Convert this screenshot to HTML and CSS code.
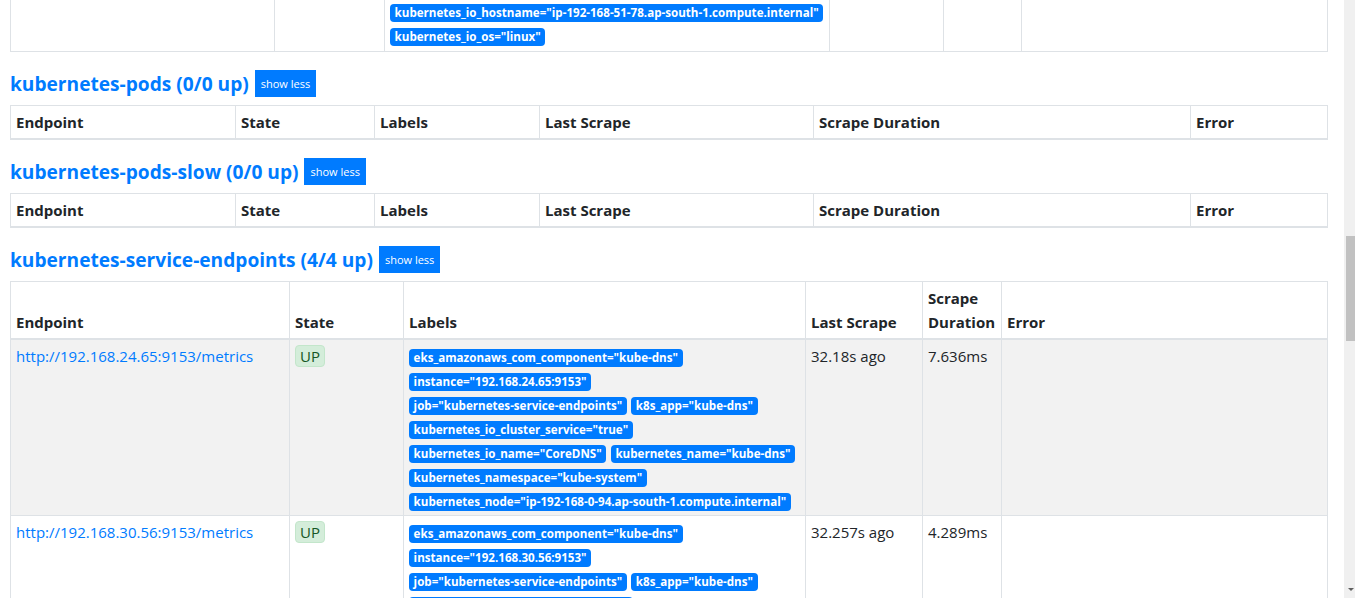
FILE: index.html
```html
<!DOCTYPE html>
<html lang="en">
<head>
<meta charset="utf-8">
<title>Prometheus Time Series Collection and Processing Server</title>
<link rel="stylesheet" href="styles.css">
</head>
<body>
<nav class="navbar">
  <span class="brand">Prometheus</span>
  <span class="nav-link">Alerts</span>
  <span class="nav-link">Graph</span>
  <span class="nav-link">Status</span>
  <span class="nav-link">Help</span>
</nav>
<main class="page">
  <h2 class="page-title">Targets</h2>
  <div class="filters"><button class="filter-btn active">All</button><button class="filter-btn">Unhealthy</button></div>

  <section class="pool">
    <div class="pool-head"><a class="pool-title" href="#pool-kubernetes-apiservers">kubernetes-apiservers (1/1 up)</a><button class="btn-xs">show less</button></div>
    <table class="targets cols-nodes">
      <colgroup><col class="c1"><col class="c2"><col class="c3"><col class="c4"><col class="c5"><col class="c6"></colgroup>
      <thead><tr><th>Endpoint</th><th>State</th><th>Labels</th><th>Last Scrape</th><th>Scrape Duration</th><th>Error</th></tr></thead>
      <tbody>
        <tr><td class="ep"><a class="ep-link" href="#">https://192.168.143.26:443/metrics</a></td><td><span class="state-up">UP</span></td><td><span class="label">instance="192.168.143.26:443"</span><span class="label">job="kubernetes-apiservers"</span></td><td>14.502s ago</td><td>58.91ms</td><td></td></tr>
      </tbody>
    </table>
  </section>

  <section class="pool">
    <div class="pool-head"><a class="pool-title" href="#pool-kubernetes-nodes">kubernetes-nodes (2/2 up)</a><button class="btn-xs">show less</button></div>
    <table class="targets cols-nodes">
      <colgroup><col class="c1"><col class="c2"><col class="c3"><col class="c4"><col class="c5"><col class="c6"></colgroup>
      <thead><tr><th>Endpoint</th><th>State</th><th>Labels</th><th>Last Scrape</th><th>Scrape Duration</th><th>Error</th></tr></thead>
      <tbody>
        <tr><td class="ep"><a class="ep-link" href="#">https://kubernetes.default.svc:443/api/v1/nodes/ip-192-168-0-94.ap-south-1.compute.internal/proxy/metrics</a></td><td><span class="state-up">UP</span></td><td><span class="label">beta_kubernetes_io_arch="amd64"</span><span class="label">beta_kubernetes_io_instance_type="t3.medium"</span><span class="label">beta_kubernetes_io_os="linux"</span><span class="label">eks_amazonaws_com_capacityType="ON_DEMAND"</span><span class="label">eks_amazonaws_com_nodegroup="ng-workers"</span><span class="label">failure_domain_beta_kubernetes_io_region="ap-south-1"</span><span class="label">failure_domain_beta_kubernetes_io_zone="ap-south-1a"</span><span class="label">instance="ip-192-168-0-94.ap-south-1.compute.internal"</span><span class="label">job="kubernetes-nodes"</span><span class="label">kubernetes_io_arch="amd64"</span><span class="label">kubernetes_io_hostname="ip-192-168-0-94.ap-south-1.compute.internal"</span><span class="label">kubernetes_io_os="linux"</span></td><td>21.31s ago</td><td>19.12ms</td><td></td></tr>
        <tr><td class="ep"><a class="ep-link" href="#">https://kubernetes.default.svc:443/api/v1/nodes/ip-192-168-51-78.ap-south-1.compute.internal/proxy/metrics</a></td><td><span class="state-up">UP</span></td><td><span class="label">beta_kubernetes_io_arch="amd64"</span><span class="label">beta_kubernetes_io_instance_type="t3.medium"</span><span class="label">beta_kubernetes_io_os="linux"</span><span class="label">eks_amazonaws_com_capacityType="ON_DEMAND"</span><span class="label">eks_amazonaws_com_nodegroup="ng-workers"</span><span class="label">failure_domain_beta_kubernetes_io_region="ap-south-1"</span><span class="label">failure_domain_beta_kubernetes_io_zone="ap-south-1b"</span><span class="label">instance="ip-192-168-51-78.ap-south-1.compute.internal"</span><span class="label">job="kubernetes-nodes"</span><span class="label">kubernetes_io_arch="amd64"</span><span class="label">kubernetes_io_hostname="ip-192-168-51-78.ap-south-1.compute.internal"</span><span class="label">kubernetes_io_os="linux"</span></td><td>25.87s ago</td><td>16.45ms</td><td></td></tr>
      </tbody>
    </table>
  </section>

  <section class="pool">
    <div class="pool-head"><a class="pool-title" href="#pool-kubernetes-nodes-cadvisor">kubernetes-nodes-cadvisor (2/2 up)</a><button class="btn-xs">show less</button></div>
    <table class="targets cols-nodes">
      <colgroup><col class="c1"><col class="c2"><col class="c3"><col class="c4"><col class="c5"><col class="c6"></colgroup>
      <thead><tr><th>Endpoint</th><th>State</th><th>Labels</th><th>Last Scrape</th><th>Scrape Duration</th><th>Error</th></tr></thead>
      <tbody>
        <tr><td class="ep"><a class="ep-link" href="#">https://kubernetes.default.svc:443/api/v1/nodes/ip-192-168-0-94.ap-south-1.compute.internal/proxy/metrics/cadvisor</a></td><td><span class="state-up">UP</span></td><td><span class="label">beta_kubernetes_io_arch="amd64"</span><span class="label">beta_kubernetes_io_instance_type="t3.medium"</span><span class="label">beta_kubernetes_io_os="linux"</span><span class="label">eks_amazonaws_com_capacityType="ON_DEMAND"</span><span class="label">eks_amazonaws_com_nodegroup="ng-workers"</span><span class="label">failure_domain_beta_kubernetes_io_region="ap-south-1"</span><span class="label">failure_domain_beta_kubernetes_io_zone="ap-south-1a"</span><span class="label">instance="ip-192-168-0-94.ap-south-1.compute.internal"</span><span class="label">job="kubernetes-nodes-cadvisor"</span><span class="label">kubernetes_io_arch="amd64"</span><span class="label">kubernetes_io_hostname="ip-192-168-0-94.ap-south-1.compute.internal"</span><span class="label">kubernetes_io_os="linux"</span></td><td>9.734s ago</td><td>88.62ms</td><td></td></tr>
        <tr><td class="ep"><a class="ep-link" href="#">https://kubernetes.default.svc:443/api/v1/nodes/ip-192-168-51-78.ap-south-1.compute.internal/proxy/metrics/cadvisor</a></td><td><span class="state-up">UP</span></td><td><span class="label">beta_kubernetes_io_arch="amd64"</span><span class="label">beta_kubernetes_io_instance_type="t3.medium"</span><span class="label">beta_kubernetes_io_os="linux"</span><span class="label">eks_amazonaws_com_capacityType="ON_DEMAND"</span><span class="label">eks_amazonaws_com_nodegroup="ng-workers"</span><span class="label">failure_domain_beta_kubernetes_io_region="ap-south-1"</span><span class="label">failure_domain_beta_kubernetes_io_zone="ap-south-1b"</span><span class="label">instance="ip-192-168-51-78.ap-south-1.compute.internal"</span><span class="label">job="kubernetes-nodes-cadvisor"</span><span class="label">kubernetes_io_arch="amd64"</span><span class="label">kubernetes_io_hostname="ip-192-168-51-78.ap-south-1.compute.internal"</span><span class="label">kubernetes_io_os="linux"</span></td><td>11.08s ago</td><td>74.31ms</td><td></td></tr>
      </tbody>
    </table>
  </section>

  <section class="pool">
    <div class="pool-head" id="pods-head"><a class="pool-title" href="#pool-kubernetes-pods">kubernetes-pods (0/0 up)</a><button class="btn-xs">show less</button></div>
    <table class="targets cols-pods">
      <colgroup><col class="c1"><col class="c2"><col class="c3"><col class="c4"><col class="c5"><col class="c6"></colgroup>
      <thead><tr><th>Endpoint</th><th>State</th><th>Labels</th><th>Last Scrape</th><th>Scrape Duration</th><th>Error</th></tr></thead>
      <tbody></tbody>
    </table>
  </section>

  <section class="pool">
    <div class="pool-head"><a class="pool-title" href="#pool-kubernetes-pods-slow">kubernetes-pods-slow (0/0 up)</a><button class="btn-xs">show less</button></div>
    <table class="targets cols-pods">
      <colgroup><col class="c1"><col class="c2"><col class="c3"><col class="c4"><col class="c5"><col class="c6"></colgroup>
      <thead><tr><th>Endpoint</th><th>State</th><th>Labels</th><th>Last Scrape</th><th>Scrape Duration</th><th>Error</th></tr></thead>
      <tbody></tbody>
    </table>
  </section>

  <section class="pool">
    <div class="pool-head"><a class="pool-title" href="#pool-kubernetes-service-endpoints">kubernetes-service-endpoints (4/4 up)</a><button class="btn-xs">show less</button></div>
    <table class="targets cols-svc">
      <colgroup><col class="c1"><col class="c2"><col class="c3"><col class="c4"><col class="c5"><col class="c6"></colgroup>
      <thead><tr><th>Endpoint</th><th>State</th><th>Labels</th><th>Last Scrape</th><th>Scrape Duration</th><th>Error</th></tr></thead>
      <tbody>
        <tr><td class="ep"><a class="ep-link" href="#">http://192.168.24.65:9153/metrics</a></td><td><span class="state-up">UP</span></td><td><span class="label">eks_amazonaws_com_component="kube-dns"</span><span class="label">instance="192.168.24.65:9153"</span><span class="label">job="kubernetes-service-endpoints"</span><span class="label">k8s_app="kube-dns"</span><span class="label">kubernetes_io_cluster_service="true"</span><span class="label">kubernetes_io_name="CoreDNS"</span><span class="label">kubernetes_name="kube-dns"</span><span class="label">kubernetes_namespace="kube-system"</span><span class="label">kubernetes_node="ip-192-168-0-94.ap-south-1.compute.internal"</span></td><td>32.18s ago</td><td>7.636ms</td><td></td></tr>
        <tr><td class="ep"><a class="ep-link" href="#">http://192.168.30.56:9153/metrics</a></td><td><span class="state-up">UP</span></td><td><span class="label">eks_amazonaws_com_component="kube-dns"</span><span class="label">instance="192.168.30.56:9153"</span><span class="label">job="kubernetes-service-endpoints"</span><span class="label">k8s_app="kube-dns"</span><span class="label">kubernetes_io_cluster_service="true"</span><span class="label">kubernetes_io_name="CoreDNS"</span><span class="label">kubernetes_name="kube-dns"</span><span class="label">kubernetes_namespace="kube-system"</span><span class="label">kubernetes_node="ip-192-168-51-78.ap-south-1.compute.internal"</span></td><td>32.257s ago</td><td>4.289ms</td><td></td></tr>
        <tr><td class="ep"><a class="ep-link" href="#">http://192.168.45.210:8080/metrics</a></td><td><span class="state-up">UP</span></td><td><span class="label">app_kubernetes_io_component="metrics"</span><span class="label">app_kubernetes_io_instance="prometheus"</span><span class="label">app_kubernetes_io_managed_by="Helm"</span><span class="label">app_kubernetes_io_name="kube-state-metrics"</span><span class="label">app_kubernetes_io_part_of="kube-state-metrics"</span><span class="label">app_kubernetes_io_version="2.8.0"</span><span class="label">helm_sh_chart="kube-state-metrics-4.30.0"</span><span class="label">instance="192.168.45.210:8080"</span><span class="label">job="kubernetes-service-endpoints"</span><span class="label">kubernetes_name="prometheus-kube-state-metrics"</span><span class="label">kubernetes_namespace="prometheus"</span><span class="label">kubernetes_node="ip-192-168-51-78.ap-south-1.compute.internal"</span></td><td>31.904s ago</td><td>21.503ms</td><td></td></tr>
        <tr><td class="ep"><a class="ep-link" href="#">http://192.168.51.78:9100/metrics</a></td><td><span class="state-up">UP</span></td><td><span class="label">app_kubernetes_io_component="metrics"</span><span class="label">app_kubernetes_io_instance="prometheus"</span><span class="label">app_kubernetes_io_managed_by="Helm"</span><span class="label">app_kubernetes_io_name="prometheus-node-exporter"</span><span class="label">app_kubernetes_io_part_of="prometheus-node-exporter"</span><span class="label">app_kubernetes_io_version="1.5.0"</span><span class="label">helm_sh_chart="prometheus-node-exporter-4.14.0"</span><span class="label">instance="192.168.51.78:9100"</span><span class="label">job="kubernetes-service-endpoints"</span><span class="label">jobLabel="node-exporter"</span><span class="label">kubernetes_name="prometheus-prometheus-node-exporter"</span><span class="label">kubernetes_namespace="prometheus"</span><span class="label">kubernetes_node="ip-192-168-51-78.ap-south-1.compute.internal"</span></td><td>28.66s ago</td><td>34.118ms</td><td></td></tr>
      </tbody>
    </table>
  </section>

  <section class="pool">
    <div class="pool-head"><a class="pool-title" href="#pool-kubernetes-service-endpoints-slow">kubernetes-service-endpoints-slow (0/0 up)</a><button class="btn-xs">show less</button></div>
    <table class="targets cols-pods">
      <colgroup><col class="c1"><col class="c2"><col class="c3"><col class="c4"><col class="c5"><col class="c6"></colgroup>
      <thead><tr><th>Endpoint</th><th>State</th><th>Labels</th><th>Last Scrape</th><th>Scrape Duration</th><th>Error</th></tr></thead>
      <tbody></tbody>
    </table>
  </section>

  <section class="pool">
    <div class="pool-head"><a class="pool-title" href="#pool-kubernetes-services">kubernetes-services (0/0 up)</a><button class="btn-xs">show less</button></div>
    <table class="targets cols-pods">
      <colgroup><col class="c1"><col class="c2"><col class="c3"><col class="c4"><col class="c5"><col class="c6"></colgroup>
      <thead><tr><th>Endpoint</th><th>State</th><th>Labels</th><th>Last Scrape</th><th>Scrape Duration</th><th>Error</th></tr></thead>
      <tbody></tbody>
    </table>
  </section>

  <section class="pool">
    <div class="pool-head"><a class="pool-title" href="#pool-prometheus">prometheus (1/1 up)</a><button class="btn-xs">show less</button></div>
    <table class="targets cols-svc">
      <colgroup><col class="c1"><col class="c2"><col class="c3"><col class="c4"><col class="c5"><col class="c6"></colgroup>
      <thead><tr><th>Endpoint</th><th>State</th><th>Labels</th><th>Last Scrape</th><th>Scrape Duration</th><th>Error</th></tr></thead>
      <tbody>
        <tr><td class="ep"><a class="ep-link" href="#">http://localhost:9090/metrics</a></td><td><span class="state-up">UP</span></td><td><span class="label">instance="localhost:9090"</span><span class="label">job="prometheus"</span></td><td>3.512s ago</td><td>6.982ms</td><td></td></tr>
      </tbody>
    </table>
  </section>

  <section class="pool">
    <div class="pool-head"><a class="pool-title" href="#pool-prometheus-pushgateway">prometheus-pushgateway (1/1 up)</a><button class="btn-xs">show less</button></div>
    <table class="targets cols-svc">
      <colgroup><col class="c1"><col class="c2"><col class="c3"><col class="c4"><col class="c5"><col class="c6"></colgroup>
      <thead><tr><th>Endpoint</th><th>State</th><th>Labels</th><th>Last Scrape</th><th>Scrape Duration</th><th>Error</th></tr></thead>
      <tbody>
        <tr><td class="ep"><a class="ep-link" href="#">http://192.168.12.41:9091/metrics</a></td><td><span class="state-up">UP</span></td><td><span class="label">app_kubernetes_io_instance="prometheus"</span><span class="label">app_kubernetes_io_managed_by="Helm"</span><span class="label">app_kubernetes_io_name="prometheus-pushgateway"</span><span class="label">app_kubernetes_io_version="v1.5.1"</span><span class="label">helm_sh_chart="prometheus-pushgateway-2.1.3"</span><span class="label">instance="192.168.12.41:9091"</span><span class="label">job="prometheus-pushgateway"</span><span class="label">kubernetes_name="prometheus-prometheus-pushgateway"</span><span class="label">kubernetes_namespace="prometheus"</span></td><td>12.44s ago</td><td>3.871ms</td><td></td></tr>
      </tbody>
    </table>
  </section>
</main>
<div class="vscroll" aria-hidden="true">
  <div class="vscroll-thumb"></div>
  <div class="vscroll-arrow"></div>
</div>
<script src="script.js"></script>
</body>
</html>
```

FILE: styles.css
```css
html {
  scroll-behavior: auto;
}

body {
  margin: 0;
  padding-right: 17px;
  font-family: "Open Sans", "Noto Sans", sans-serif;
  font-size: 15px;
  line-height: 24px;
  color: #212529;
  background: #fff;
}

/* window scrollbar, drawn over the right edge */
.vscroll {
  position: fixed;
  top: 0;
  right: 0;
  width: 11px;
  height: 100vh;
  background: #f0f0f0;
}

.vscroll-thumb {
  position: absolute;
  top: 236px;
  right: 0;
  width: 9px;
  height: 105px;
  background: #c1c1c1;
}

.vscroll-arrow {
  position: absolute;
  right: 1px;
  bottom: 7px;
  width: 0;
  height: 0;
  border-top: 3px solid #5f5f5f;
  border-left: 3px solid transparent;
  border-right: 3px solid transparent;
}

.navbar {
  display: flex;
  align-items: center;
  gap: 16px;
  height: 56px;
  padding: 0 16px;
  background: #343a40;
  color: rgba(255, 255, 255, 0.5);
}

.brand {
  color: #fff;
  font-size: 19px;
  margin-right: 8px;
}

.page {
  padding: 0 10px 40px;
}

.page-title {
  margin: 16px 0 8px;
  font-size: 30px;
  line-height: 36px;
  font-weight: 500;
}

.filters {
  display: flex;
}

.filter-btn {
  font: 15px "Open Sans", sans-serif;
  padding: 6px 12px;
  border: 1px solid #007bff;
  background: #fff;
  color: #007bff;
}

.filter-btn.active {
  background: #007bff;
  color: #fff;
}

.pool {
  margin-top: 18.5px;
}

.pool-head {
  display: flex;
  align-items: center;
  gap: 6px;
  margin-bottom: 8px;
}

.pool-title {
  font-size: 19.15px;
  font-weight: 700;
  line-height: 26px;
  color: #007bff;
  text-decoration: none;
}

.btn-xs {
  font-family: "Open Sans", sans-serif;
  font-size: 11px;
  line-height: 17px;
  padding: 4px 5px;
  color: #fff;
  background: #007bff;
  border: 1px solid #007bff;
  border-radius: 0;
}

.targets {
  width: 100%;
  border-collapse: collapse;
  table-layout: fixed;
  border: 1px solid #dee2e6;
}

.targets th,
.targets td {
  border: 1px solid #dee2e6;
  padding: 4px 5px 3.5px;
  text-align: left;
}

.targets th {
  vertical-align: bottom;
  border-bottom-width: 2px;
  font-weight: 700;
}

.targets td {
  vertical-align: top;
}

.targets tbody tr:nth-of-type(odd) {
  background: #f2f2f2;
}

.cols-pods .c1 { width: 225px; }
.cols-pods .c2 { width: 139px; }
.cols-pods .c3 { width: 165px; }
.cols-pods .c4 { width: 274px; }
.cols-pods .c5 { width: 377px; }

.cols-nodes .c1 { width: 264px; }
.cols-nodes .c2 { width: 110px; }
.cols-nodes .c3 { width: 445px; }
.cols-nodes .c4 { width: 114px; }
.cols-nodes .c5 { width: 78px; }

.cols-svc .c1 { width: 279px; }
.cols-svc .c2 { width: 114px; }
.cols-svc .c3 { width: 402px; }
.cols-svc .c4 { width: 117px; }
.cols-svc .c5 { width: 79px; }

.ep {
  overflow-wrap: anywhere;
}

.ep-link {
  color: #007bff;
  text-decoration: none;
}

.state-up {
  display: inline-block;
  vertical-align: top;
  margin-top: 1px;
  padding: 0 4px;
  line-height: 20px;
  color: #155724;
  background: #d4edda;
  border: 1px solid #c3e6cb;
  border-radius: 4px;
}

.label {
  display: inline-block;
  margin-right: 4.5px;
  padding: 3px 4.6px;
  font-size: 11.6px;
  font-weight: 700;
  line-height: 12px;
  color: #fff;
  background: #007bff;
  border-radius: 4px;
  white-space: nowrap;
}
```

FILE: script.js
```js
function placeView() {
  var head = document.getElementById('pods-head');
  if (!head) return;
  var y = head.getBoundingClientRect().top + window.pageYOffset - 70;
  window.scrollTo(0, y);
}
placeView();
window.addEventListener('load', placeView);
```
